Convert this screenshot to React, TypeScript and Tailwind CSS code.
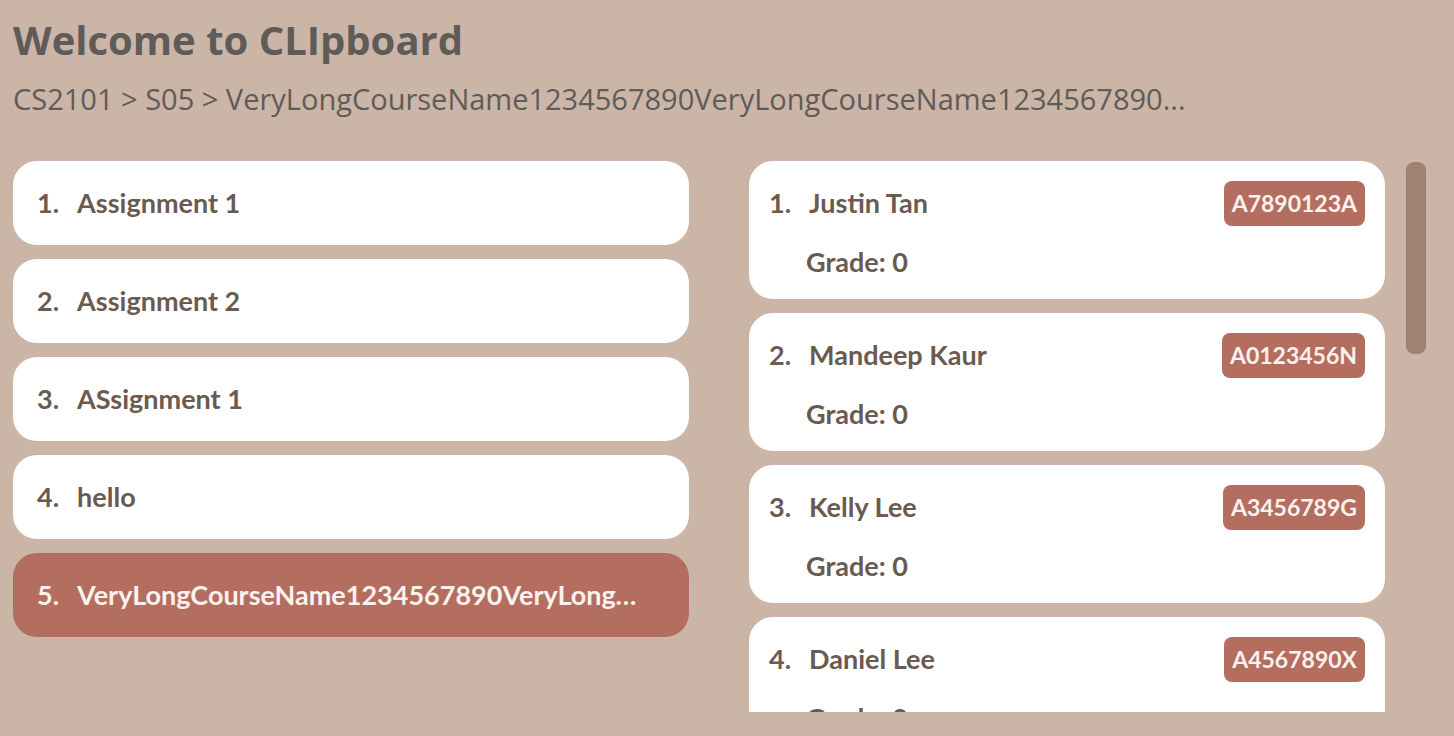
import React from "react";

const assignments = [
  "Assignment 1",
  "Assignment 2",
  "ASsignment 1",
  "hello",
  "VeryLongCourseName1234567890VeryLongCourseName1234567890",
];

const students = [
  { name: "Justin Tan", id: "A7890123A" },
  { name: "Mandeep Kaur", id: "A0123456N" },
  { name: "Kelly Lee", id: "A3456789G" },
  { name: "Daniel Lee", id: "A4567890X" },
];

const bodyFont = { fontFamily: "Lato, 'Noto Sans', sans-serif" };

export default function App() {
  return (
    <div className="w-[1454px] h-[736px] bg-[#cbb5a7] overflow-hidden">
      <div className="pl-[13px] pt-[13px]">
        <h1
          className="text-[40px] leading-[54px] font-bold text-[#5f5b59]"
          style={{ fontFamily: "'Open Sans', sans-serif" }}
        >
          Welcome to CLIpboard
        </h1>
        <p
          className="mt-[12px] text-[29px] leading-[40px] text-[#5f5b59] whitespace-nowrap"
          style={{ fontFamily: "'Open Sans', sans-serif" }}
        >
          CS2101 &gt; S05 &gt; VeryLongCourseName1234567890VeryLongCourseName1234567890...
        </p>
      </div>
      <div className="flex mt-[42px] pl-[13px]" style={bodyFont}>
        <div className="w-[676px] flex flex-col gap-[14px]">
          {assignments.map((a, i) => {
            const sel = i === 4;
            return (
              <div
                key={i}
                className={`h-[84px] rounded-[24px] flex items-center pl-[24px] pr-[36px] ${
                  sel ? "bg-[#b46e5f] text-[#fbf1ee]" : "bg-white text-[#6b5a4f]"
                }`}
              >
                <div className="flex items-center gap-[18px] min-w-0 text-[27px] font-bold">
                  <span className="shrink-0">{i + 1}.</span>
                  <span className="truncate">{a}</span>
                </div>
              </div>
            );
          })}
        </div>
        <div className="ml-[60px] h-[551px] overflow-hidden w-[636px] flex flex-col gap-[14px]">
          {students.map((s, i) => (
            <div
              key={i}
              className="shrink-0 h-[138px] bg-white rounded-[24px] pl-[20px] pr-[20px] pt-[20px] text-[#6b5a4f]"
            >
              <div className="flex items-center justify-between h-[45px]">
                <div className="flex items-center gap-[18px] text-[27px] font-bold">
                  <span>{i + 1}.</span>
                  <span>{s.name}</span>
                </div>
                <span className="h-[45px] flex items-center px-[8px] rounded-[8px] bg-[#b46e5f] text-[#fbf1ee] text-[23px] font-bold">
                  {s.id}
                </span>
              </div>
              <div className="mt-[20px] pl-[37px] text-[27px] font-bold leading-[32px]">
                Grade: 0
              </div>
            </div>
          ))}
        </div>
        <div className="ml-[21px] mt-[1px] w-[20px] h-[192px] rounded-[8px] bg-[#a08270]" />
      </div>
    </div>
  );
}
